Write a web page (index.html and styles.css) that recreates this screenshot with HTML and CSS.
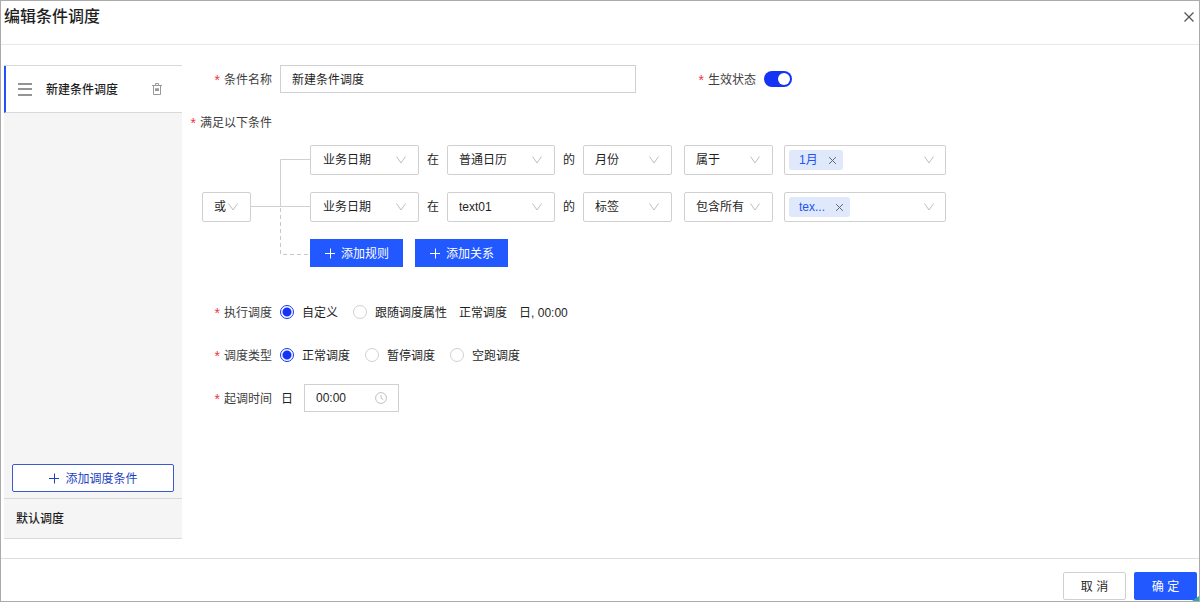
FILE: index.html
```
<!DOCTYPE html>
<html lang="zh-CN">
<head>
<meta charset="utf-8">
<meta name="viewport" content="width=device-width, initial-scale=1">
<title>编辑条件调度</title>
<link rel="stylesheet" href="styles.css">
</head>
<body>
<svg class="sprite" aria-hidden="true">
  <symbol id="chevron" viewBox="0 0 12 12"><path d="M1.500 2.500L6 9l4.500-6.500" fill="none" stroke="currentColor"/></symbol>
  <symbol id="plus" viewBox="0 0 12 12"><path d="M1 6.500h10M6.500 1.500v10" fill="none" stroke="currentColor"/></symbol>
  <symbol id="cross" viewBox="0 0 12 12"><path d="M1.500 1.500l9 9M10.500 1.500l-9 9" fill="none" stroke="currentColor" stroke-width="1.300"/></symbol>
</svg>
<div class="dialog" role="dialog" aria-labelledby="dialog-title">
  <header class="dialog-header">
    <h1 class="dialog-title" id="dialog-title">编辑条件调度</h1>
    <button class="icon-button close" type="button" aria-label="关闭"><svg class="close-icon"><use href="#cross"/></svg></button>
  </header>

  <div class="dialog-body">
    <aside class="sidebar">
      <div class="schedule-item">
        <svg class="drag-icon" viewBox="0 0 14 14" aria-hidden="true"><path d="M0 2h14M0 7h14M0 13h14" stroke="#949494" stroke-width="2"/></svg>
        <span class="schedule-name">新建条件调度</span>
        <button class="icon-button" type="button" aria-label="删除">
          <svg class="trash-icon" viewBox="0 0 12 12"><path d="M1 2.500h10M4.500 2V.5h3V2M2.500 2.500v9h7v-9M4.500 8V5.500h1V8M7.500 8V5.500h-1V8" fill="none" stroke="currentColor"/></svg>
        </button>
      </div>
      <button class="button button-outline" type="button"><svg class="icon"><use href="#plus"/></svg>添加调度条件</button>
      <div class="default-item">默认调度</div>
    </aside>

    <form class="form">
      <div class="form-row name-row">
        <label class="form-label required" for="name">条件名称</label>
        <input class="text-input name-input" id="name" type="text" value="新建条件调度">
        <label class="form-label required" for="enabled">生效状态</label>
        <input class="switch" id="enabled" type="checkbox" role="switch" checked>
      </div>

      <div class="form-row">
        <span class="form-label required">满足以下条件</span>
      </div>
      <div class="builder">
        <span class="select-box relation">
          <select class="select" aria-label="条件关系"><option>或</option><option>且</option></select>
          <svg class="chevron"><use href="#chevron"/></svg>
        </span>
        <svg class="connector" viewBox="0 0 59 124" aria-hidden="true">
          <path d="M0 61.500h59M59 14.500H29.500v47" fill="none" stroke="#d0d0d0"/>
          <path d="M29.500 63v46.500H57" fill="none" stroke="#c8c8c8" stroke-dasharray="4 3"/>
        </svg>
        <div class="rules">
          <div class="rule">
            <span class="select-box"><select class="select" aria-label="字段"><option>业务日期</option></select><svg class="chevron"><use href="#chevron"/></svg></span>
            <span class="word">在</span>
            <span class="select-box calendar"><select class="select" aria-label="日历"><option>普通日历</option></select><svg class="chevron"><use href="#chevron"/></svg></span>
            <span class="word">的</span>
            <span class="select-box small"><select class="select" aria-label="属性"><option>月份</option></select><svg class="chevron"><use href="#chevron"/></svg></span>
            <span class="select-box small operator"><select class="select" aria-label="运算"><option>属于</option></select><svg class="chevron"><use href="#chevron"/></svg></span>
            <div class="multi-select" role="group" aria-label="值">
              <span class="tag">1月<button class="icon-button" type="button" aria-label="移除 1月"><svg class="tag-cross"><use href="#cross"/></svg></button></span>
              <svg class="chevron"><use href="#chevron"/></svg>
            </div>
          </div>
          <div class="rule">
            <span class="select-box"><select class="select" aria-label="字段"><option>业务日期</option></select><svg class="chevron"><use href="#chevron"/></svg></span>
            <span class="word">在</span>
            <span class="select-box calendar"><select class="select" aria-label="日历"><option>text01</option></select><svg class="chevron"><use href="#chevron"/></svg></span>
            <span class="word">的</span>
            <span class="select-box small"><select class="select" aria-label="属性"><option>标签</option></select><svg class="chevron"><use href="#chevron"/></svg></span>
            <span class="select-box small operator"><select class="select" aria-label="运算"><option>包含所有</option></select><svg class="chevron"><use href="#chevron"/></svg></span>
            <div class="multi-select" role="group" aria-label="值">
              <span class="tag">tex...<button class="icon-button" type="button" aria-label="移除 tex..."><svg class="tag-cross"><use href="#cross"/></svg></button></span>
              <svg class="chevron"><use href="#chevron"/></svg>
            </div>
          </div>
          <div class="rule-actions">
            <button class="button button-add" type="button"><svg class="icon"><use href="#plus"/></svg>添加规则</button>
            <button class="button button-add" type="button"><svg class="icon"><use href="#plus"/></svg>添加关系</button>
          </div>
        </div>
      </div>

      <div class="settings">
        <div class="form-row" role="radiogroup" aria-labelledby="run-label">
          <span class="form-label required" id="run-label">执行调度</span>
          <label class="radio-label"><input class="radio" type="radio" name="run" checked><span>自定义</span></label>
          <label class="radio-label"><input class="radio" type="radio" name="run"><span>跟随调度属性</span></label>
          <span class="summary"><span>正常调度</span><span>日, 00:00</span></span>
        </div>
        <div class="form-row" role="radiogroup" aria-labelledby="type-label">
          <span class="form-label required" id="type-label">调度类型</span>
          <label class="radio-label"><input class="radio" type="radio" name="type" checked><span>正常调度</span></label>
          <label class="radio-label"><input class="radio" type="radio" name="type"><span>暂停调度</span></label>
          <label class="radio-label"><input class="radio" type="radio" name="type"><span>空跑调度</span></label>
        </div>
        <div class="form-row">
          <label class="form-label required" for="start">起调时间</label>
          <span class="unit">日</span>
          <span class="time-box">
            <input class="text-input time-input" id="start" type="text" value="00:00">
            <svg class="clock" viewBox="0 0 12 12" aria-hidden="true"><path d="M6 .6a5.400 5.400 0 1 0 0 10.800A5.400 5.400 0 1 0 6 .6M6 3v3.300l2.200 1.300" fill="none" stroke="#bfbfbf"/></svg>
          </span>
        </div>
      </div>
    </form>
  </div>

  <footer class="dialog-footer">
    <button class="button button-default" type="button">取 消</button>
    <button class="button button-primary" type="button">确 定</button>
  </footer>
</div>
</body>
</html>
```

FILE: styles.css
```
* {
  box-sizing: border-box;
}

body {
  margin: 0;
  color: #1f1f1f;
  background: #fff;
}

body, button, input, select {
  font: 12px/18px "Liberation Sans", "Noto Sans CJK SC", sans-serif;
}

button, input, select {
  margin: 0;
}

svg {
  display: block;
  flex: none;
}

.sprite {
  position: absolute;
  width: 0;
  height: 0;
}

.dialog {
  position: relative;
  display: flex;
  flex-direction: column;
  min-height: 100vh;
  border: 1px solid #ababab;
}

/* small coloured resize corner */
.dialog::after {
  content: "";
  position: absolute;
  right: 0;
  bottom: 0;
  width: 7px;
  height: 5px;
  background: #2fa8a8;
  clip-path: polygon(100% 0, 100% 100%, 0 100%);
}

.dialog-header {
  display: flex;
  align-items: center;
  justify-content: space-between;
  height: 44px;
  padding: 0 4px 12px 3px;
  border-bottom: 1px solid #e8e8e8;
}

.dialog-title {
  margin: 0;
  font-size: 16px;
  line-height: 24px;
  font-weight: 500;
}

.icon-button {
  display: flex;
  padding: 0;
  border: 0;
  background: none;
  color: #999;
  cursor: pointer;
}

.close {
  color: #555;
}

.close-icon {
  width: 12px;
  height: 12px;
}

.dialog-body {
  display: flex;
  flex: 1;
  gap: 8px;
  padding: 20px 3px 19px;
}

.sidebar {
  display: flex;
  flex-direction: column;
  flex: none;
  width: 178px;
  background: #f5f5f5;
  border-top: 1px solid #d9d9d9;
  border-bottom: 1px solid #d9d9d9;
}

.schedule-item {
  display: flex;
  align-items: center;
  height: 47px;
  padding: 0 19px 0 12px;
  background: #fff;
  border-left: 2px solid #2253f5;
  border-bottom: 1px solid #d9d9d9;
}

.schedule-name {
  flex: 1;
  margin-left: 14px;
  padding-top: 2px;
  font-weight: 500;
}

.drag-icon {
  width: 14px;
  height: 14px;
}

.trash-icon {
  width: 12px;
  height: 12px;
}

.button {
  display: flex;
  align-items: center;
  justify-content: center;
  gap: 5px;
  height: 28px;
  padding: 2px 14px 0;
  border: 1px solid transparent;
  border-radius: 2px;
  cursor: pointer;
}

.icon {
  width: 12px;
  height: 12px;
  margin-bottom: 2px;
}

.button-outline {
  margin: auto 8px 6px;
  border-color: #3a5bd0;
  background: #fff;
  color: #1d3fc4;
}

.default-item {
  height: 40px;
  padding: 1px 12px 0;
  border-top: 1px solid #d9d9d9;
  line-height: 39px;
  font-weight: 500;
}

.form {
  flex: 1;
  min-width: 0;
}

.form-row {
  display: flex;
  align-items: center;
  height: 28px;
}

.name-row {
  margin-bottom: 15px;
}

.form-label {
  display: flex;
  align-items: center;
  justify-content: flex-end;
  gap: 4px;
  flex: none;
  width: 82px;
  margin-right: 8px;
  padding-top: 2px;
  white-space: nowrap;
  color: #404040;
}

.required::before {
  content: "*";
  font-size: 14px;
  color: #f0333c;
}

.text-input {
  height: 28px;
  padding: 0 11px;
  border: 1px solid #d0d0d0;
  background: #fff;
  color: inherit;
}

.name-input {
  width: 356px;
  margin-right: 38px;
  padding-bottom: 2px;
}

.switch {
  appearance: none;
  display: flex;
  width: 28px;
  height: 16px;
  padding: 2px;
  border-radius: 8px;
  background: #bfbfbf;
}

.switch::before {
  content: "";
  width: 12px;
  height: 12px;
  border-radius: 50%;
  background: #fff;
}

.switch:checked {
  justify-content: flex-end;
  background: #1433f5;
}

.builder {
  display: flex;
  align-items: center;
  margin: 9px 0 29px 12px;
}

.connector {
  width: 59px;
  height: 124px;
}

.rules {
  display: flex;
  flex-direction: column;
  align-self: flex-start;
  gap: 17px;
}

.rule {
  display: flex;
  align-items: center;
}

.select-box {
  display: grid;
  align-items: center;
  width: 109px;
}

.select-box > * {
  grid-area: 1 / 1;
}

.select {
  appearance: none;
  width: 100%;
  height: 30px;
  padding: 0 12px;
  border: 1px solid #d0d0d0;
  border-radius: 2px;
  background: #fff;
  color: inherit;
}

.chevron {
  justify-self: end;
  width: 12px;
  height: 12px;
  margin-right: 12px;
  color: #bfbfbf;
  pointer-events: none;
}

.calendar {
  width: 108px;
}

.calendar .select,
.small .select,
.relation .select {
  padding: 0 0 0 11px;
}

.small {
  width: 89px;
}

.operator {
  margin-left: 12px;
}

.relation {
  width: 49px;
}

.word {
  margin: 0 8px;
}

.multi-select {
  display: flex;
  align-items: center;
  justify-content: space-between;
  width: 162px;
  height: 30px;
  margin-left: 11px;
  padding-left: 4px;
  border: 1px solid #d0d0d0;
  border-radius: 2px;
}

.multi-select .chevron {
  margin-right: 10px;
}

.tag {
  display: flex;
  align-items: center;
  gap: 10px;
  height: 20px;
  padding: 0 6px 0 10px;
  border-radius: 3px;
  background: #dfe9fb;
  color: #2253f5;
}

.tag .icon-button {
  color: #5c6470;
}

.tag-cross {
  width: 9px;
  height: 9px;
}

.rule-actions {
  display: flex;
  gap: 12px;
}

.button-add {
  border-radius: 0;
  padding: 2px 13px 0;
  background: #2158ff;
  color: #fff;
}

.settings {
  display: grid;
  gap: 15px;
}

.radio-label {
  display: flex;
  align-items: center;
  gap: 8px;
  margin-right: 15px;
}

.radio-label span,
.summary,
.unit {
  padding-top: 2px;
}

.radio {
  appearance: none;
  width: 14px;
  height: 14px;
  border: 1px solid #d0d0d0;
  border-radius: 50%;
  background: #fff;
}

.radio:checked {
  border-color: #1433f5;
  background: radial-gradient(circle, #1433f5 4px, #fff 5px);
}

.summary {
  display: flex;
  gap: 12px;
  margin-left: -3px;
}

.unit {
  margin: 0 11px 0 1px;
}

.time-box {
  display: grid;
  align-items: center;
  width: 95px;
}

.time-box > * {
  grid-area: 1 / 1;
}

.time-input {
  width: 100%;
}

.clock {
  justify-self: end;
  width: 12px;
  height: 12px;
  margin-right: 12px;
  pointer-events: none;
}

.dialog-footer {
  display: flex;
  justify-content: flex-end;
  gap: 8px;
  padding: 13px 2px 1px;
  border-top: 1px solid #dedede;
}

.button-default,
.button-primary {
  width: 63px;
  padding: 2px 0 0;
}

.button-default {
  border-color: #d0d0d0;
  background: #fff;
  color: inherit;
}

.button-primary {
  background: #2158ff;
  color: #fff;
}
```
